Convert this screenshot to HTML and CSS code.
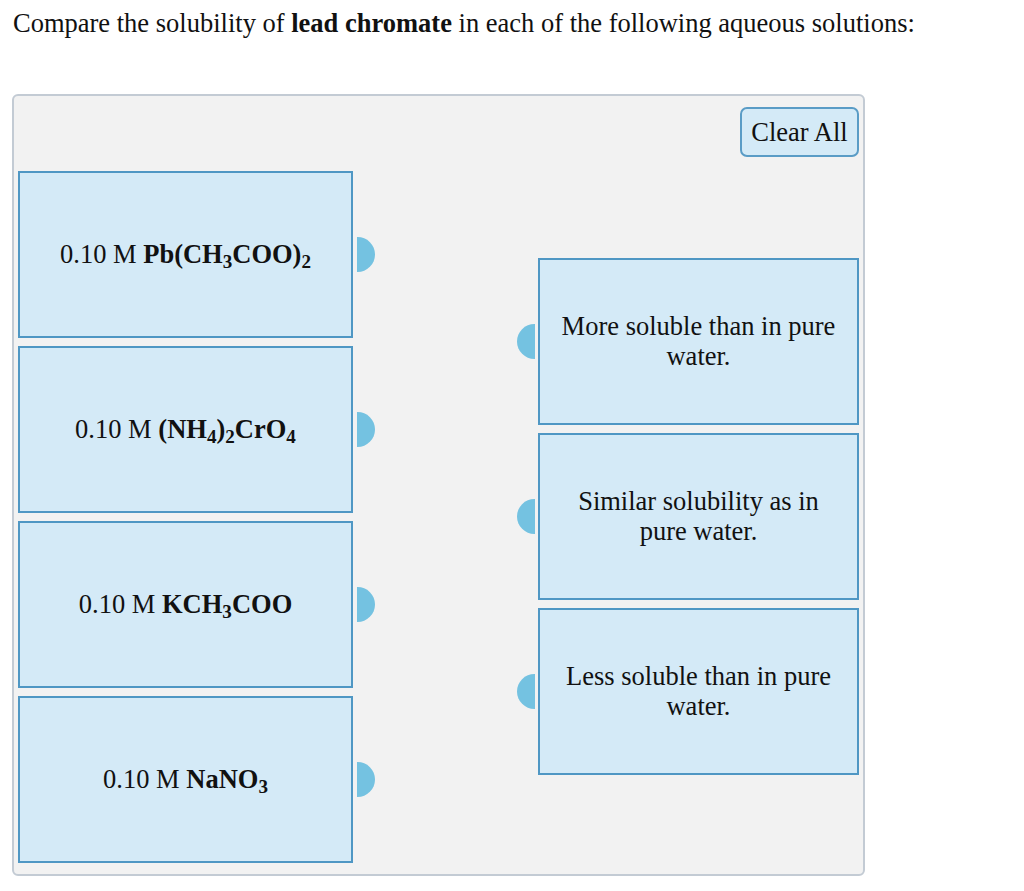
FILE: index.html
```html
<!DOCTYPE html>
<html lang="en">
<head>
  <meta charset="UTF-8">
  <title>Solubility of Lead Chromate</title>
  <link rel="stylesheet" href="styles.css">
</head>
<body>
  <p class="prompt">Compare the solubility of <b>lead chromate</b> in each of the following aqueous solutions:</p>

  <div class="match-panel">
    <div class="panel-top">
      <button type="button" class="clear-btn">Clear All</button>
    </div>

    <div class="match-body">
      <!-- solutions to drag -->
      <div class="col col-left">
        <div class="item">
          <div class="card">0.10 M&nbsp;<b>Pb(CH<sub>3</sub>COO)<sub>2</sub></b></div>
          <span class="knob knob-right"></span>
        </div>
        <div class="item">
          <div class="card">0.10 M&nbsp;<b>(NH<sub>4</sub>)<sub>2</sub>CrO<sub>4</sub></b></div>
          <span class="knob knob-right"></span>
        </div>
        <div class="item">
          <div class="card">0.10 M&nbsp;<b>KCH<sub>3</sub>COO</b></div>
          <span class="knob knob-right"></span>
        </div>
        <div class="item">
          <div class="card">0.10 M&nbsp;<b>NaNO<sub>3</sub></b></div>
          <span class="knob knob-right"></span>
        </div>
      </div>

      <!-- answer targets -->
      <div class="col col-right">
        <div class="item">
          <span class="knob knob-left"></span>
          <div class="card card-target">More soluble than in pure water.</div>
        </div>
        <div class="item">
          <span class="knob knob-left"></span>
          <div class="card card-target">Similar solubility as in pure water.</div>
        </div>
        <div class="item">
          <span class="knob knob-left"></span>
          <div class="card card-target">Less soluble than in pure water.</div>
        </div>
      </div>
    </div>
  </div>
</body>
</html>
```

FILE: styles.css
```css
* {
  box-sizing: border-box;
}

body {
  margin: 0;
  padding: 8px 12px;
  font-family: 'Liberation Serif', 'Times New Roman', serif;
  font-size: 26.5px;
  color: #111;
  background: #fff;
}

.prompt {
  margin: 0 0 55px 1px;
}

.match-panel {
  width: 853px;
  height: 782px;
  background: #f2f2f2;
  border: 2px solid #c3cbd4;
  border-radius: 6px;
  padding: 11px 4px 12px 4px;
}

.panel-top {
  display: flex;
  justify-content: flex-end;
  margin-bottom: 14px;
}

.clear-btn {
  font-family: inherit;
  font-size: 26.5px;
  color: #111;
  background: #d4eaf7;
  border: 2px solid #5a9cc6;
  border-radius: 7px;
  width: 119px;
  height: 50px;
  padding: 0;
  cursor: pointer;
}

.match-body {
  display: flex;
  justify-content: space-between;
}

.col {
  display: flex;
  flex-direction: column;
  gap: 8px;
}

.col-right {
  margin-top: 87px;
}

.item {
  display: flex;
  align-items: center;
  gap: 4px;
}

.col-right .item {
  gap: 3px;
}

.card {
  width: 335px;
  height: 167px;
  display: flex;
  align-items: center;
  justify-content: center;
  text-align: center;
  background: #d4eaf7;
  border: 2px solid #4f97c4;
  padding: 0 22px;
  line-height: 1.13;
}

.card-target {
  width: 321px;
  padding: 0 16px;
}

.card sub {
  font-size: 0.72em;
  line-height: 0;
  vertical-align: -0.28em;
}

.knob {
  display: block;
  width: 18px;
  height: 35px;
  background: #74c2e1;
}

.knob-right {
  border-radius: 0 18px 18px 0;
}

.knob-left {
  border-radius: 18px 0 0 18px;
}
```
